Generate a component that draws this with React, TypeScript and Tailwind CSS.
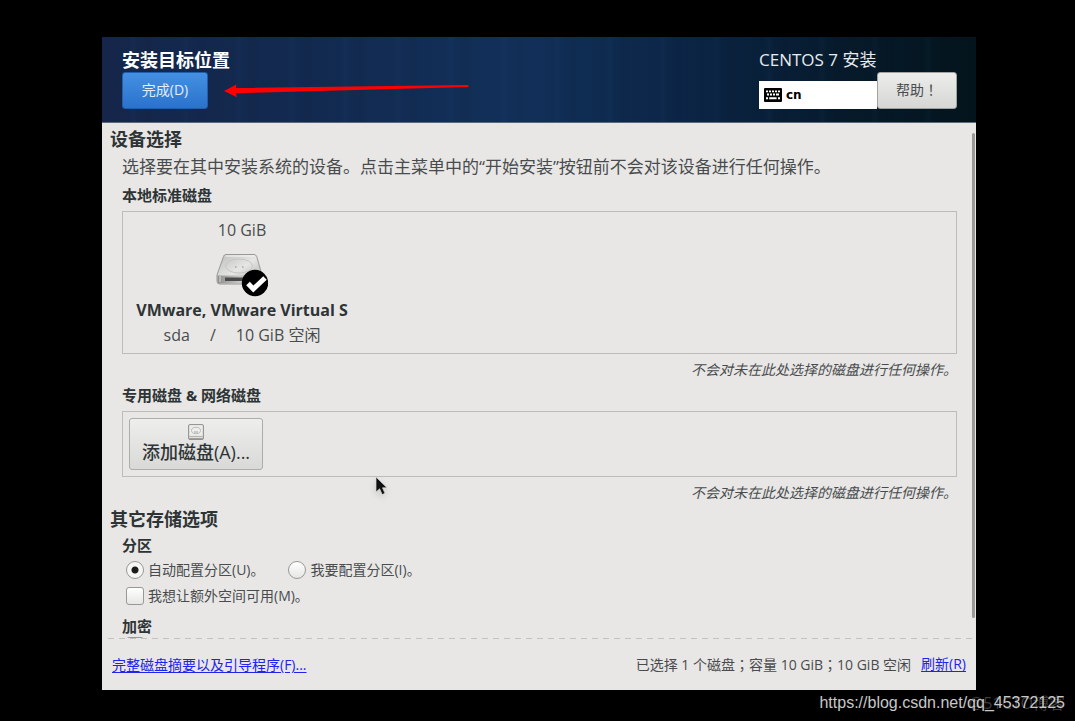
import type { ReactNode } from "react";

const ArrowMark = () => (
  <svg
    className="absolute left-[122px] top-[47px]"
    width="246"
    height="14"
    viewBox="0 0 246 14"
    aria-hidden="true"
  >
    <path d="M0 7 L12.5 0.5 L11.8 4 L244.5 1 V3 L12 9.3 L12.8 13.3 Z" fill="#ff0000" />
  </svg>
);

const KeyboardIcon = () => (
  <svg width="18" height="14" viewBox="0 0 18 14" aria-hidden="true">
    <rect width="18" height="14" rx="1" fill="#000" />
    <g fill="#fff">
      <path d="M2 2.4h2v1.8H2zM5 2.4h2v1.8H5zM8 2.4h2v1.8H8zM11 2.4h2v1.8h-2zM14 2.4h2v1.8h-2z" />
      <path d="M3 5.6h2v1.8H3zM6 5.6h2v1.8H6zM9 5.6h2v1.8H9zM12 5.6h3v1.8h-3z" />
      <path d="M2 9.2h2v2H2zM5.2 9.2h7.4v2H5.2zM14 9.2h2v2h-2z" />
    </g>
  </svg>
);

const DiskIcon = () => (
  <svg width="52" height="48" viewBox="0 0 52 48" aria-hidden="true">
    <defs>
      <linearGradient id="diskTop" x1="0" y1="0" x2="1" y2="1">
        <stop offset="0" stopColor="#bcbcba" />
        <stop offset="0.5" stopColor="#e6e6e5" />
        <stop offset="1" stopColor="#a8a8a6" />
      </linearGradient>
      <linearGradient id="diskFront" x1="0" y1="0" x2="1" y2="0">
        <stop offset="0" stopColor="#8e8e8c" />
        <stop offset="0.5" stopColor="#c8c8c6" />
        <stop offset="1" stopColor="#8a8a88" />
      </linearGradient>
    </defs>
    <path d="M10 4.5 H38 Q40 4.5 40.7 6.5 L46 25 V31 Q46 34 43 34 H3.5 Q1 34 1 31 V25 L7.5 6.5 Q8 4.5 10 4.5 Z" fill="url(#diskTop)" stroke="#999997" />
    <path d="M1.5 25.5 H45.5 V31 Q45.5 33.5 43 33.5 H4 Q1.5 33.5 1.5 31 Z" fill="url(#diskFront)" />
    <path d="M9.5 6 H38.5" stroke="#f8f8f8" />
    <ellipse cx="23" cy="16" rx="13.5" ry="7" fill="none" stroke="#c6c6c4" />
    <path d="M19 17h1.5M26 17h1.5" stroke="#888" />
    <path d="M9 27.5 H30 V31 H9 Z" fill="#4a4a4a" />
    <path d="M4 26 V32" stroke="#ddd" />
    <circle cx="39" cy="33" r="13.2" fill="#000" />
    <path d="M32 33.5 L37.3 39 L49 28" fill="none" stroke="#fff" strokeWidth="5" />
  </svg>
);

const SmallDiskIcon = () => (
  <svg width="16" height="16" viewBox="0 0 16 16" aria-hidden="true">
    <rect x="0.5" y="0.5" width="15" height="15" rx="1.5" fill="#dededc" stroke="#979795" />
    <rect x="2" y="1.5" width="12" height="10" fill="#ededeb" />
    <ellipse cx="8" cy="6.5" rx="4.5" ry="3.2" fill="none" stroke="#bcbcba" />
    <path d="M6 8h4" stroke="#a5a5a3" />
    <path d="M1 12.5h14" stroke="#b5b5b3" />
    <path d="M1 14.8h14" stroke="#858583" />
  </svg>
);

const Pointer = () => (
  <svg
    className="absolute left-[273px] top-[439px] drop-shadow-md"
    width="15"
    height="22"
    viewBox="0 0 15 22"
    aria-hidden="true"
  >
    <path d="M1 1 V16 L4.6 12.8 L7.2 18.6 L10 17.3 L7.5 11.8 H12 Z" fill="#111" stroke="#d8d8d8" strokeWidth="0.7" />
  </svg>
);

const SectionTitle = ({ children }: { children: ReactNode }) => (
  <h2 className="text-[18px] leading-6 font-bold text-[#2e3436]">{children}</h2>
);

const SubTitle = ({ children }: { children: ReactNode }) => (
  <h3 className="text-[15px] leading-5 font-bold text-[#2e3436]">{children}</h3>
);

const DiskNote = () => (
  <p className="mt-1.5 text-right text-[14px] leading-5 italic">
    不会对未在此处选择的磁盘进行任何操作。
  </p>
);

// full-width punctuation that sits in the middle of its cell
const Mark = ({ children }: { children: ReactNode }) => (
  <span className="font-['Noto_Sans_CJK_JP',sans-serif]" lang="ja">{children}</span>
);

const boxClass =
  "size-[18px] shrink-0 appearance-none border border-[#989896] bg-linear-to-b from-white to-[#e6e6e4]";

const radioClass = `${boxClass} rounded-full checked:bg-[radial-gradient(circle,#1c1c1c_3px,#f6f6f5_4px)]`;

const App = () => {
  return (
    <div className="relative flex h-screen flex-col bg-black pt-[37px] pr-[99px] pb-[31px] pl-[102px] font-['Open_Sans','Noto_Sans_CJK_SC',sans-serif] text-[#484c4e]">
      <div className="relative flex min-h-0 flex-1 flex-col bg-[#e8e7e5]">
        <header className="relative flex justify-between border-b border-[#5a6a7a] bg-[repeating-linear-gradient(90deg,transparent_0px,transparent_26px,rgba(70,120,180,0.04)_31px,transparent_36px,rgba(0,0,0,0.04)_47px,transparent_53px),linear-gradient(90deg,#15264a_0%,#122a50_25%,#113059_48%,#0b2444_68%,#061a2b_85%,#03141c_100%)] pt-[11px] pr-[19px] pl-5">
          <div className="flex flex-col items-start pb-[13px]">
            <h1 className="text-[18px] leading-6 font-bold text-white">安装目标位置</h1>
            <button
              type="button"
              className="h-[37px] w-[86px] rounded-[3px] border border-[#1f5fae] bg-linear-to-b from-[#4590e2] to-[#2a72cc] pb-0.5 text-[14px] text-[#e4eefb]"
            >
              完成(D)
            </button>
          </div>
          <div className="flex flex-col pb-[13px]">
            <p className="text-[17px] leading-6 text-[#e6ebee]">CENTOS 7 安装</p>
            <div className="flex items-end">
              <div className="flex h-7 w-[118px] items-center gap-1 bg-white pl-[5px]">
                <KeyboardIcon />
                <span className="font-['DejaVu_Sans',sans-serif] text-[12px] font-bold text-black">cn</span>
              </div>
              <button
                type="button"
                className="h-[37px] w-20 rounded-[3px] border border-[#a2a2a0] bg-linear-to-b from-[#ededec] to-[#d6d6d4] pb-0.5 text-[14px]"
              >
                帮助<Mark>！</Mark>
              </button>
            </div>
          </div>
          <ArrowMark />
        </header>

        <main className="flex min-h-0 flex-1">
          <div className="min-w-0 flex-1 overflow-y-auto pt-1 pr-[15px] pl-2 [scrollbar-width:none]">
            <SectionTitle>设备选择</SectionTitle>
            <div className="pl-3">
              <p className="mt-1 text-[17px] leading-6">
                选择要在其中安装系统的设备。点击主菜单中的“开始安装”按钮前不会对该设备进行任何操作。
              </p>
              <div className="mt-1.5">
                <SubTitle>本地标准磁盘</SubTitle>
              </div>
              <div className="mt-1.5 flex border border-[#bcbcba] px-[13px] py-1.5">
                <div className="flex min-w-[212px] flex-col items-center text-[16px] leading-6">
                  <span>10 GiB</span>
                  <div className="mt-2">
                    <DiskIcon />
                  </div>
                  <span className="font-bold text-[#2e3436]">VMware, VMware Virtual S</span>
                  <div className="mt-px flex gap-5">
                    <span>sda</span>
                    <span>/</span>
                    <span>10 GiB 空闲</span>
                  </div>
                </div>
              </div>
              <DiskNote />
              <div className="mt-[5px]">
                <SubTitle>专用磁盘 &amp; 网络磁盘</SubTitle>
              </div>
              <div className="mt-1.5 border border-[#bcbcba] p-1.5">
                <button
                  type="button"
                  className="flex h-[52px] w-[134px] flex-col items-center justify-center rounded-[3px] border border-[#acacaa] bg-linear-to-b from-[#eeeeec] to-[#d9d9d7] text-[18px] leading-6 font-medium text-[#2e3436]"
                >
                  <SmallDiskIcon />
                  添加磁盘(A)...
                </button>
              </div>
              <DiskNote />
            </div>

            <div className="mt-1">
              <SectionTitle>其它存储选项</SectionTitle>
            </div>
            <div className="pl-3">
              <div className="mt-1">
                <SubTitle>分区</SubTitle>
              </div>
              <div className="mt-[5px] flex gap-6 pl-1 text-[14px] leading-5">
                <label className="flex items-center gap-1">
                  <input type="radio" name="partitioning" defaultChecked className={radioClass} />
                  自动配置分区(U)。
                </label>
                <label className="flex items-center gap-1">
                  <input type="radio" name="partitioning" className={radioClass} />
                  我要配置分区(I)。
                </label>
              </div>
              <label className="mt-1.5 flex items-center gap-1 pl-1 text-[14px] leading-5">
                <input type="checkbox" className={`${boxClass} rounded-[3px] checked:bg-[#8a8a88]`} />
                我想让额外空间可用(M)。
              </label>
              <div className="mt-2.5 pb-px">
                <SubTitle>
                  <label htmlFor="encrypt">加密</label>
                </SubTitle>
              </div>
              <div className="flex pl-1">
                <input id="encrypt" type="checkbox" className={`${boxClass} rounded-[3px] checked:bg-[#8a8a88]`} />
              </div>
            </div>
          </div>
          <div className="mt-2.5 mr-px mb-5 w-[3px] rounded-full bg-[#999997]" />
        </main>

        <footer>
          <div className="ml-1.5 h-px bg-[repeating-linear-gradient(90deg,#c2c2c0_0px,#c2c2c0_6px,transparent_6px,transparent_11px)]" />
          <div className="flex items-center justify-between px-2.5 pt-[15px] pb-[15px] text-[14px] leading-5">
            <a href="#summary" className="text-[#2222ee] underline underline-offset-2">
              完整磁盘摘要以及引导程序(F)...
            </a>
            <div className="flex gap-2.5">
              <span>
                已选择 1 个磁盘<Mark>；</Mark>容量 10 GiB<Mark>；</Mark>10 GiB 空闲
              </span>
              <a href="#refresh" className="text-[#2222ee] underline underline-offset-2">
                刷新(R)
              </a>
            </div>
          </div>
        </footer>
        <Pointer />
      </div>

      <span className="absolute right-2.5 bottom-1.5 text-[16px] leading-6 text-[#3c3c3c]">@51CTO博客</span>
      <span className="absolute right-2.5 bottom-1.5 font-['Liberation_Sans',sans-serif] text-[16px] leading-6 text-[#c8c8c8]">
        https://blog.csdn.net/qq_45372125
      </span>
    </div>
  );
};

export default App;
